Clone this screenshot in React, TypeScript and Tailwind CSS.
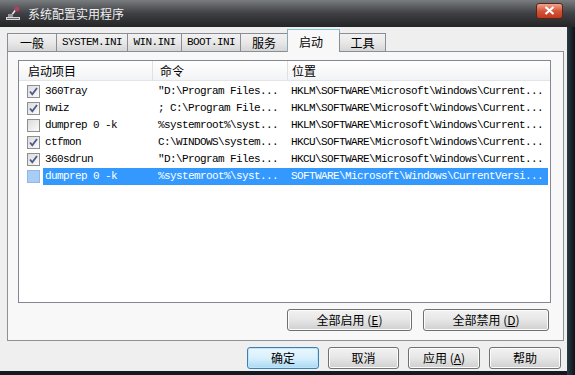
import React from 'react';

const mono = "font-['Liberation_Mono','Noto_Sans_CJK_SC',monospace] text-[11px] tracking-[-0.6px]";
const cjk = "font-['Noto_Sans_CJK_SC','Liberation_Sans',sans-serif] text-[12px]";

const rows = [
  { on: true, name: '360Tray', cmd: '"D:\\Program Files...', loc: 'HKLM\\SOFTWARE\\Microsoft\\Windows\\Current...' },
  { on: true, name: 'nwiz', cmd: '; C:\\Program File...', loc: 'HKLM\\SOFTWARE\\Microsoft\\Windows\\Current...' },
  { on: false, name: 'dumprep 0 -k', cmd: '%systemroot%\\syst...', loc: 'HKLM\\SOFTWARE\\Microsoft\\Windows\\Current...' },
  { on: true, name: 'ctfmon', cmd: 'C:\\WINDOWS\\system...', loc: 'HKCU\\SOFTWARE\\Microsoft\\Windows\\Current...' },
  { on: true, name: '360sdrun', cmd: '"D:\\Program Files...', loc: 'HKCU\\SOFTWARE\\Microsoft\\Windows\\Current...' },
  { on: false, name: 'dumprep 0 -k', cmd: '%systemroot%\\syst...', loc: 'SOFTWARE\\Microsoft\\Windows\\CurrentVersi...', sel: true },
];

const tabs = [
  { label: '一般', w: 'w-[50px]', cls: cjk },
  { label: 'SYSTEM.INI', w: 'w-[72px]', cls: mono },
  { label: 'WIN.INI', w: 'w-[55px]', cls: mono },
  { label: 'BOOT.INI', w: 'w-[60px]', cls: mono },
  { label: '服务', w: 'w-[48px]', cls: cjk },
  { label: '启动', w: 'w-[53px]', cls: cjk, active: true },
  { label: '工具', w: 'w-[47px]', cls: cjk },
];

const Check = ({ on, sel }: { on: boolean; sel?: boolean }) => (
  <div className={`w-[13px] h-[13px] border flex items-center justify-center shrink-0 ${sel ? 'border-[#8fb8e6] bg-[#a9cdf5]' : 'border-[#8f8f8f] bg-gradient-to-br from-[#dcdcdc] to-[#fbfbfb]'}`}>
    {on && (
      <svg width="11" height="11" viewBox="0 0 11 11">
        <path d="M2 5.5 L4.3 8.3 L9 2" stroke="#4a5a8c" strokeWidth="1.8" fill="none" />
      </svg>
    )}
  </div>
);

const Btn = ({ children, w, primary }: { children: React.ReactNode; w: string; primary?: boolean }) => (
  <div
    className={`${w} h-[22px] rounded-[3px] border flex items-center justify-center ${cjk} text-black ${
      primary
        ? 'border-[#3c7fb1] bg-gradient-to-b from-[#eaf6fd] via-[#d9f0fc] to-[#a7d9f5] shadow-[inset_0_0_0_1px_#bfe5f9]'
        : 'border-[#707070] bg-gradient-to-b from-[#f2f2f2] via-[#e6e6e6] to-[#cfcfcf] shadow-[inset_0_0_0_1px_#fcfcfc]'
    }`}
  >
    {children}
  </div>
);

export default function App() {
  return (
    <div className="w-[575px] h-[375px] bg-[#141a20] flex flex-col overflow-hidden">
      {/* title bar */}
      <div className="h-[27px] shrink-0 bg-gradient-to-b from-[#7a7d80] via-[#3e4043] to-[#232527] flex items-center pl-[5px] pr-[12px]">
        <svg width="18" height="16" viewBox="0 0 18 16" className="shrink-0">
          <rect x="1" y="11" width="14" height="3" fill="#d9d9d9" />
          <rect x="2" y="12" width="12" height="1" fill="#6a6a6a" />
          <path d="M6 10 L12 2" stroke="#e8e8e8" strokeWidth="1.5" />
          <circle cx="12" cy="3" r="2.5" fill="#b04060" />
          <rect x="3" y="8" width="5" height="3" fill="#9a9a9a" />
        </svg>
        <div className={`ml-[5px] ${cjk} text-[12px] text-[#f0f0f0] leading-none`}>系统配置实用程序</div>
        <div className="ml-auto mt-[-6px] w-[27px] h-[16px] rounded-[3px] border border-[#5a2418] bg-gradient-to-b from-[#eea48e] via-[#d4553a] to-[#c0391c] flex items-center justify-center">
          <svg width="11" height="9" viewBox="0 0 11 9">
            <path d="M1.5 1 L9.5 8 M9.5 1 L1.5 8" stroke="#ffffff" strokeWidth="2.2" />
          </svg>
        </div>
      </div>

      <div className="flex flex-1">
        {/* window body */}
        <div className="w-[567px] h-[344px] bg-[#efefef] pl-[7px] pr-[4px] pt-[2px] flex flex-col">
          {/* tabs */}
          <div className="flex items-end h-[23px] relative z-10">
            {tabs.map((t) =>
              t.active ? (
                <div key={t.label} className={`${t.w} h-[23px] -ml-px bg-[#f8f8f8] border border-b-0 border-[#8fa8b8] border-t-[#7fc8d8] flex items-start pt-[3px] pl-[11px] ${t.cls} text-black`}>
                  {t.label}
                </div>
              ) : (
                <div key={t.label} className={`${t.w} h-[19px] -ml-px first:ml-0 bg-gradient-to-b from-[#f2f2f2] via-[#e8e8e8] to-[#d6d6d6] border border-[#8a8d94] flex items-center justify-center ${t.cls} text-black`}>
                  {t.label}
                </div>
              )
            )}
          </div>
          {/* tab panel */}
          <div className="w-[557px] h-[290px] -mt-px bg-[#f8f8f8] border border-[#8e9196] pl-[10px] pt-[8px]">
            <div className="w-[533px] h-[243px] bg-white border border-[#828790] flex flex-col">
              <div className="h-[20px] flex bg-gradient-to-b from-white to-[#f2f3f5] border-b border-[#e3e4e6]">
                <div className={`w-[134px] pl-[9px] border-r border-[#e0e0e0] flex items-center ${cjk} text-black`}>启动项目</div>
                <div className={`w-[135px] pl-[7px] border-r border-[#e0e0e0] flex items-center ${cjk} text-black`}>命令</div>
                <div className={`flex-1 pl-[4px] flex items-center ${cjk} text-black`}>位置</div>
              </div>
              <div className="pt-[2px] flex flex-col">
                {rows.map((r, i) => (
                  <div key={i} className="h-[17px] flex items-center">
                    <div className="w-[24px] pl-[8px] flex items-center">
                      <Check on={r.on} sel={r.sel} />
                    </div>
                    <div className={`flex-1 mr-[2px] h-[17px] flex items-center ${mono} ${r.sel ? 'bg-[#3399ff] text-white' : 'text-black'}`}>
                      <div className="w-[115px] pl-[2px] whitespace-pre">{r.name}</div>
                      <div className="w-[133px] pl-[0px] whitespace-pre">{r.cmd}</div>
                      <div className="flex-1 whitespace-pre overflow-hidden">{r.loc}</div>
                    </div>
                  </div>
                ))}
              </div>
            </div>
            <div className="flex gap-[11px] mt-[6px] ml-[269px]">
              <Btn w="w-[125px]">全部启用 (<span className="underline">E</span>)</Btn>
              <Btn w="w-[126px]">全部禁用 (<span className="underline">D</span>)</Btn>
            </div>
          </div>
          {/* bottom buttons */}
          <div className="flex gap-[9px] mt-[6px] ml-[240px]">
            <Btn w="w-[72px]" primary>确定</Btn>
            <Btn w="w-[71px]">取消</Btn>
            <Btn w="w-[72px]">应用 (<span className="underline">A</span>)</Btn>
            <Btn w="w-[72px]">帮助</Btn>
          </div>
        </div>
        <div className="flex-1 bg-gradient-to-r from-[#2b3a44] to-[#0d1318]" />
      </div>
    </div>
  );
}
